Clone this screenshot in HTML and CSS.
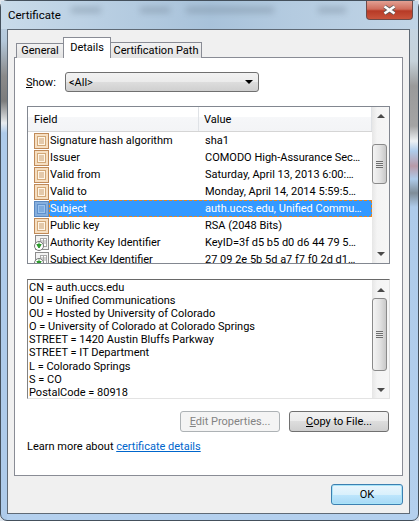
FILE: index.html
```html
<!DOCTYPE html>
<html>

<head>
    <title>Certificate</title>
    <link rel="stylesheet" href="styles.css">
</head>

<body>
    <svg class="defs" width="0" height="0">
        <symbol id="certField" viewBox="0 0 16 16">
            <rect x="0.5" y="0.5" width="14" height="15" fill="#f6dfc2" stroke="#c08a58"/>
            <rect x="3.5" y="3.5" width="8" height="9" fill="#fff6e8" stroke="#d2a878"/>
            <path d="M5 6h5M5 8h5M5 10h5" stroke="#c89c6c"/>
        </symbol>
        <symbol id="certFieldSelected" viewBox="0 0 16 16">
            <rect x="0.5" y="0.5" width="14" height="15" fill="#85aedd" stroke="#5a88c0"/>
            <rect x="3.5" y="3.5" width="8" height="9" fill="#9cc4ee" stroke="#5f90cc"/>
            <path d="M5 6h5M5 8h5M5 10h5" stroke="#5f90cc"/>
        </symbol>
        <symbol id="certExtension" viewBox="0 0 16 16">
            <rect x="1.5" y="0.5" width="13" height="14" fill="#f2f2f2" stroke="#8c8c8c"/>
            <rect x="6.5" y="3.5" width="6" height="8" fill="#fff" stroke="#a8a8a8"/>
            <path d="M7 6h5M7 8h5M9.5 4v7" stroke="#a8a8a8"/>
            <circle cx="5" cy="11" r="4.5" fill="#fff" stroke="#777"/>
            <path d="M5 7.5v3.5M2.8 9.5L5 13l2.2-3.5z" fill="#2e9a2e" stroke="#2e9a2e" stroke-width="1"/>
        </symbol>
    </svg>

    <div class="window">
        <div class="titlebar">
            <span class="window-title">Certificate</span>
            <button class="close-button">
                <svg width="15" height="10" viewBox="0 0 15 10">
                    <path d="M2.5 1.5L12.5 8.5M12.5 1.5L2.5 8.5" stroke="#5c5c5c" stroke-width="4"/>
                    <path d="M2.5 1.5L12.5 8.5M12.5 1.5L2.5 8.5" stroke="#fff" stroke-width="2.6"/>
                </svg>
            </button>
        </div>

        <div class="client">
            <div class="tabs">
                <div class="tab tab-general">General</div>
                <div class="tab tab-active">Details</div>
                <div class="tab tab-path">Certification Path</div>
            </div>

            <div class="panel">
                <div class="show-row">
                    <label class="show-label"><u>S</u>how:</label>
                    <div class="select">
                        <span>&lt;All&gt;</span>
                        <span class="select-arrow"></span>
                    </div>
                </div>

                <div class="list">
                    <div class="list-main">
                        <div class="list-header">
                            <div class="col-field">Field</div>
                            <div class="col-value">Value</div>
                        </div>
                        <div class="row">
                            <svg class="row-icon"><use href="#certField"/></svg>
                            <div class="cell-field">Signature hash algorithm</div>
                            <div class="cell-value">sha1</div>
                        </div>
                        <div class="row">
                            <svg class="row-icon"><use href="#certField"/></svg>
                            <div class="cell-field">Issuer</div>
                            <div class="cell-value">COMODO High-Assurance Sec…</div>
                        </div>
                        <div class="row">
                            <svg class="row-icon"><use href="#certField"/></svg>
                            <div class="cell-field">Valid from</div>
                            <div class="cell-value">Saturday, April 13, 2013 6:00:…</div>
                        </div>
                        <div class="row">
                            <svg class="row-icon"><use href="#certField"/></svg>
                            <div class="cell-field">Valid to</div>
                            <div class="cell-value">Monday, April 14, 2014 5:59:5…</div>
                        </div>
                        <div class="row row-selected">
                            <svg class="row-icon"><use href="#certFieldSelected"/></svg>
                            <div class="row-highlight">
                                <div class="cell-field">Subject</div>
                                <div class="cell-value">auth.uccs.edu, Unified Commu…</div>
                            </div>
                        </div>
                        <div class="row">
                            <svg class="row-icon"><use href="#certField"/></svg>
                            <div class="cell-field">Public key</div>
                            <div class="cell-value">RSA (2048 Bits)</div>
                        </div>
                        <div class="row">
                            <svg class="row-icon"><use href="#certExtension"/></svg>
                            <div class="cell-field">Authority Key Identifier</div>
                            <div class="cell-value">KeyID=3f d5 b5 d0 d6 44 79 5…</div>
                        </div>
                        <div class="row">
                            <svg class="row-icon"><use href="#certExtension"/></svg>
                            <div class="cell-field">Subject Key Identifier</div>
                            <div class="cell-value">27 09 2e 5b 5d a7 f7 f0 2d d1…</div>
                        </div>
                    </div>
                    <div class="scrollbar">
                        <span class="arrow-up"></span>
                        <div class="thumb thumb-short"><span class="grip"></span></div>
                        <span class="arrow-down"></span>
                    </div>
                </div>

                <div class="details">
                    <div class="details-text">
                        CN = auth.uccs.edu<br>
                        OU = Unified Communications<br>
                        OU = Hosted by University of Colorado<br>
                        O = University of Colorado at Colorado Springs<br>
                        STREET = 1420 Austin Bluffs Parkway<br>
                        STREET = IT Department<br>
                        L = Colorado Springs<br>
                        S = CO<br>
                        PostalCode = 80918
                    </div>
                    <div class="scrollbar scrollbar-details">
                        <span class="arrow-up"></span>
                        <div class="thumb thumb-long"><span class="grip"></span></div>
                        <span class="arrow-down"></span>
                    </div>
                </div>

                <div class="panel-buttons">
                    <button class="btn" disabled><u>E</u>dit Properties...</button>
                    <button class="btn"><u>C</u>opy to File...</button>
                </div>

                <div class="learn">Learn more about <a href="#">certificate details</a></div>
            </div>

            <div class="footer">
                <button class="btn btn-ok">OK</button>
            </div>
        </div>
    </div>
</body>

</html>
```

FILE: styles.css
```css
/* General Styles */
html,
body {
    margin: 0;
    padding: 0;
    height: 100%;
    background-color: #dfe6ee;
    overflow: hidden;
}

body,
button {
    font-family: Roboto, "Open Sans", sans-serif;
    font-size: 11px;
    color: #000;
}

.defs {
    position: absolute;
}

/* Window frame */
.window {
    width: 419px;
    height: 521px;
    box-sizing: border-box;
    padding: 0 8px 6px 6px;
    border: 1px solid #44505c;
    border-radius: 7px;
    background:
        linear-gradient(to bottom, #c3d6e8 0, #b4c8da 40px, #8a8a8a 75px, #7c7c7c 100px, #e8ecef 122px, #aecbea 132px, #aecbea 100%) left top / 6px 100% no-repeat,
        linear-gradient(to bottom, #c3d6e8 0, #c6d2da 60px, #9a9a9a 85px, #a4a4a4 125px, #eef2f4 140px, #aecbea 150px, #b89aa8 165px, #aecbea 178px, #7f8d98 192px, #aecbea 206px, #b4d0ee 100%) right top / 8px 100% no-repeat,
        linear-gradient(to bottom, #bcd0e4 0, #c6d9ea 29px, #b4d0ee 100%);
}

.titlebar {
    height: 28px;
    display: flex;
    justify-content: space-between;
    align-items: flex-start;
    background: linear-gradient(to right, #c9dbea 0, #b8cee2 25%, #a8c2da 50%, #b4cbe0 70%, #c0d4e6 100%);
    margin: 0 -8px 0 -6px;
    padding: 0 8px 0 6px;
    position: relative;
}

/* blurred text of the window behind the glass */
.titlebar::before {
    content: "";
    position: absolute;
    left: 70px;
    top: 6px;
    width: 275px;
    height: 6px;
    filter: blur(3px);
    opacity: 0.45;
    background: linear-gradient(to right, #76889a 0, #76889a 11%, transparent 11%, transparent 25%, #76889a 25%, #76889a 36%, transparent 36%, transparent 42%, #76889a 42%, #76889a 74%, transparent 74%, transparent 90%, #76889a 90%, #76889a 100%);
}

.window-title {
    margin-top: 7px;
    margin-left: 1px;
    font-size: 11.5px;
    position: relative;
}

.close-button {
    width: 47px;
    height: 19px;
    margin-right: -3px;
    padding: 0;
    display: flex;
    align-items: center;
    justify-content: center;
    border: 1px solid #6e4a48;
    border-top: none;
    border-radius: 0 0 4px 4px;
    background: linear-gradient(to bottom, #e2a093 0, #cf6d5c 45%, #b73a26 55%, #c9543c 100%);
}

/* Client area */
.client {
    height: 485px;
    box-sizing: border-box;
    padding: 7px 6px 0 6px;
    background-color: #f0f0f0;
    border: 1px solid #5f6a76;
}

/* Tabs */
.tabs {
    display: flex;
    align-items: flex-start;
    height: 20px;
    padding-left: 2px;
    position: relative;
    z-index: 1;
}

.tab {
    height: 14px;
    margin-top: 6px;
    line-height: 14px;
    text-align: center;
    border: 1px solid #898c95;
    border-bottom: none;
    background: linear-gradient(to bottom, #f2f2f2, #e3e3e3);
    white-space: nowrap;
}

.tab-general {
    width: 46px;
}

.tab-path {
    width: 90px;
    margin-top: 5px;
    height: 15px;
    line-height: 15px;
}

.tab-active {
    width: 46px;
    height: 20px;
    margin-top: 0;
    margin-left: -1px;
    margin-right: -1px;
    line-height: 19px;
    background: #fff;
    position: relative;
}

/* Tab panel */
.panel {
    height: 419px;
    box-sizing: border-box;
    padding: 14px 12px 0 12px;
    background-color: #fff;
    border: 1px solid #898c95;
}

.show-row {
    display: flex;
    align-items: center;
    height: 20px;
}

.show-label {
    width: 39px;
    margin-left: -1px;
    flex: none;
}

.select {
    width: 194px;
    height: 20px;
    box-sizing: border-box;
    padding: 0 5px 0 3px;
    display: flex;
    align-items: center;
    justify-content: space-between;
    border: 1px solid #707070;
    border-radius: 3px;
    background: linear-gradient(to bottom, #f2f2f2 0, #ebebeb 50%, #dddddd 50%, #cfcfcf 100%);
}

.select-arrow {
    border-top: 4px solid #000;
    border-left: 4px solid transparent;
    border-right: 4px solid transparent;
}

/* Field list */
.list {
    width: 363px;
    height: 158px;
    box-sizing: border-box;
    margin-top: 14px;
    display: flex;
    border: 1px solid #828790;
    background-color: #fff;
    overflow: hidden;
}

.list-main {
    width: 344px;
    flex: none;
    overflow: hidden;
}

.list-header {
    height: 25px;
    display: flex;
    box-sizing: border-box;
    border-bottom: 1px solid #d5d5d5;
    background: linear-gradient(to bottom, #fff 0, #fff 40%, #f6f7f9 40%, #f3f4f6 100%);
}

.col-field {
    width: 171px;
    box-sizing: border-box;
    padding: 6px 0 0 6px;
    border-right: 1px solid #dfe2e6;
}

.col-value {
    flex: 1;
    padding: 6px 0 0 5px;
    border-right: 1px solid #dfe2e6;
}

.row {
    display: flex;
    height: 17px;
    line-height: 18px;
    align-items: center;
}

.row-icon {
    width: 16px;
    height: 16px;
    margin-left: 6px;
    margin-right: -1px;
    flex: none;
}

.cell-field {
    width: 155px;
    height: 17px;
    padding-left: 1px;
    flex: none;
    white-space: nowrap;
    overflow: hidden;
}

.cell-value {
    height: 17px;
    white-space: nowrap;
    overflow: hidden;
}

.row-highlight {
    flex: 1;
    height: 17px;
    display: flex;
    color: #fff;
    background-color: #3399ff;
    outline: 1px dashed #e8851c;
    outline-offset: -1px;
}

/* Scrollbars */
.scrollbar {
    width: 17px;
    flex: none;
    box-sizing: border-box;
    padding: 7px 0 0 0;
    display: flex;
    flex-direction: column;
    align-items: center;
    background: linear-gradient(to right, #e6e6e6, #f4f4f4 30%, #f6f6f6);
}

.arrow-up {
    border-bottom: 4px solid #4a4a4a;
    border-left: 4px solid transparent;
    border-right: 4px solid transparent;
}

.arrow-down {
    border-top: 4px solid #4a4a4a;
    border-left: 4px solid transparent;
    border-right: 4px solid transparent;
}

.thumb {
    width: 15px;
    box-sizing: border-box;
    align-self: flex-start;
    display: flex;
    align-items: center;
    justify-content: center;
    border: 1px solid #8a8a8a;
    border-radius: 3px;
    background: linear-gradient(to right, #f4f4f4, #e4e4e4 50%, #c8c8c8);
}

.thumb-short {
    height: 40px;
    margin-top: 26px;
    margin-bottom: 68px;
}

.thumb-long {
    height: 73px;
    margin-top: 6px;
    margin-bottom: 17px;
}

.grip {
    width: 7px;
    height: 7px;
    background: repeating-linear-gradient(to bottom, #6e6e6e 0, #6e6e6e 1px, #e8e8e8 1px, #e8e8e8 2px);
}

/* Details box */
.details {
    width: 363px;
    height: 120px;
    box-sizing: border-box;
    margin-top: 15px;
    display: flex;
    border-top: 1px solid #696969;
    border-left: 1px solid #828282;
    border-bottom: 1px solid #e3e3e3;
    border-right: 1px solid #e3e3e3;
}

.details-text {
    flex: 1;
    padding: 1px 0 0 1px;
    line-height: 13.1px;
    white-space: nowrap;
}

.scrollbar-details {
    padding-top: 8px;
}

/* Buttons */
.panel-buttons {
    display: flex;
    justify-content: flex-end;
    gap: 9px;
    margin-top: 12px;
    margin-right: 1px;
}

.btn {
    width: 100px;
    height: 21px;
    padding: 0;
    border: 1px solid #707070;
    border-radius: 3px;
    background: linear-gradient(to bottom, #f2f2f2 0, #ebebeb 50%, #dddddd 50%, #cfcfcf 100%);
}

.btn:disabled {
    color: #838383;
    border-color: #adb2b5;
    background: #f4f4f4;
}

.btn-ok {
    width: 72px;
    border-color: #3c7fb1;
    box-shadow: inset 0 0 0 1px #a8e4f8;
    background: linear-gradient(to bottom, #eaf6fd 0, #d9f0fc 50%, #bee6fd 50%, #a7d9f5 100%);
}

.learn {
    margin-top: 6px;
    height: 17px;
    line-height: 17px;
}

.learn a {
    color: #0066cc;
}

/* Dialog footer */
.footer {
    display: flex;
    justify-content: flex-end;
    padding-top: 8px;
}
```
